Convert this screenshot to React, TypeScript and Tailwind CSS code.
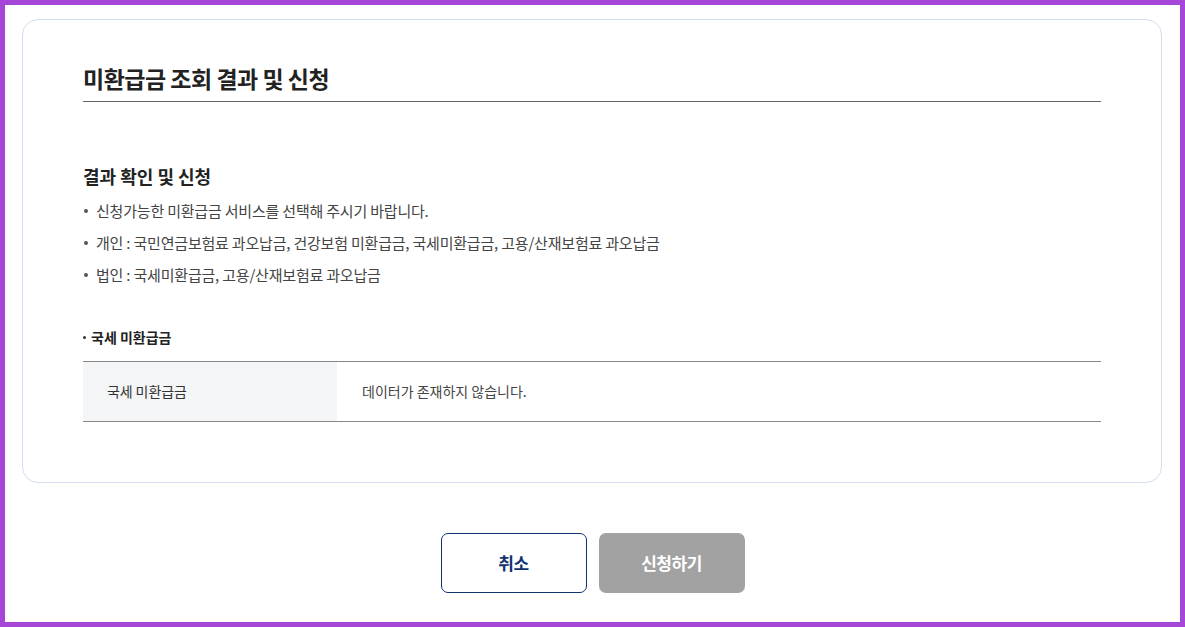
import React from 'react';

const notices = [
  '신청가능한 미환급금 서비스를 선택해 주시기 바랍니다.',
  '개인 : 국민연금보험료 과오납금, 건강보험 미환급금, 국세미환급금, 고용/산재보험료 과오납금',
  '법인 : 국세미환급금, 고용/산재보험료 과오납금',
];

export default function App() {
  return (
    <div className="h-[627px] box-border border-[5px] border-[#a546d8] bg-white font-['Noto_Sans_CJK_KR','Noto_Sans',sans-serif] flex flex-col">
      {/* Result card */}
      <div className="mt-[14px] ml-[17px] mr-[18px] border border-[#d5ddf0] rounded-[16px] px-[60px] pt-[42px] pb-[60px]">
        <h1 className="text-[23px] leading-[33px] font-bold tracking-[-0.5px] text-[#222] pb-[6px] border-b border-[#666]">
          미환급금 조회 결과 및 신청
        </h1>

        <h2 className="mt-[61px] text-[18px] leading-[26px] font-bold text-[#222]">
          결과 확인 및 신청
        </h2>

        <ul className="mt-[6px]">
          {notices.map((text) => (
            <li key={text} className="flex items-center h-[32px] text-[15px] tracking-[-0.2px] text-[#444]">
              <span className="w-[4px] h-[4px] rounded-full bg-[#555] ml-[1px] mr-[8px] shrink-0" />
              {text}
            </li>
          ))}
        </ul>

        <div className="mt-[36px] flex items-center h-[20px] text-[14px] font-bold text-[#222]">
          <span className="w-[3px] h-[3px] rounded-full bg-[#333] mr-[5px] shrink-0" />
          국세 미환급금
        </div>

        <div className="mt-[14px] flex h-[61px] border-t border-b border-[#888]">
          <div className="w-[254px] bg-[#f4f5f7] flex items-center pl-[24px] text-[14px] tracking-[-0.1px] text-[#333]">
            국세 미환급금
          </div>
          <div className="flex-1 flex items-center pl-[25px] text-[14px] text-[#444]">
            데이터가 존재하지 않습니다.
          </div>
        </div>
      </div>

      {/* Actions */}
      <div className="mt-[50px] flex justify-center gap-[12px]">
        <button className="w-[146px] h-[60px] rounded-[7px] border border-[#10336e] bg-white text-[17px] font-bold tracking-[-0.5px] text-[#10336e]">
          취소
        </button>
        <button className="w-[146px] h-[60px] rounded-[7px] bg-[#a2a2a2] text-[17px] font-bold tracking-[-0.5px] text-white">
          신청하기
        </button>
      </div>
    </div>
  );
}
